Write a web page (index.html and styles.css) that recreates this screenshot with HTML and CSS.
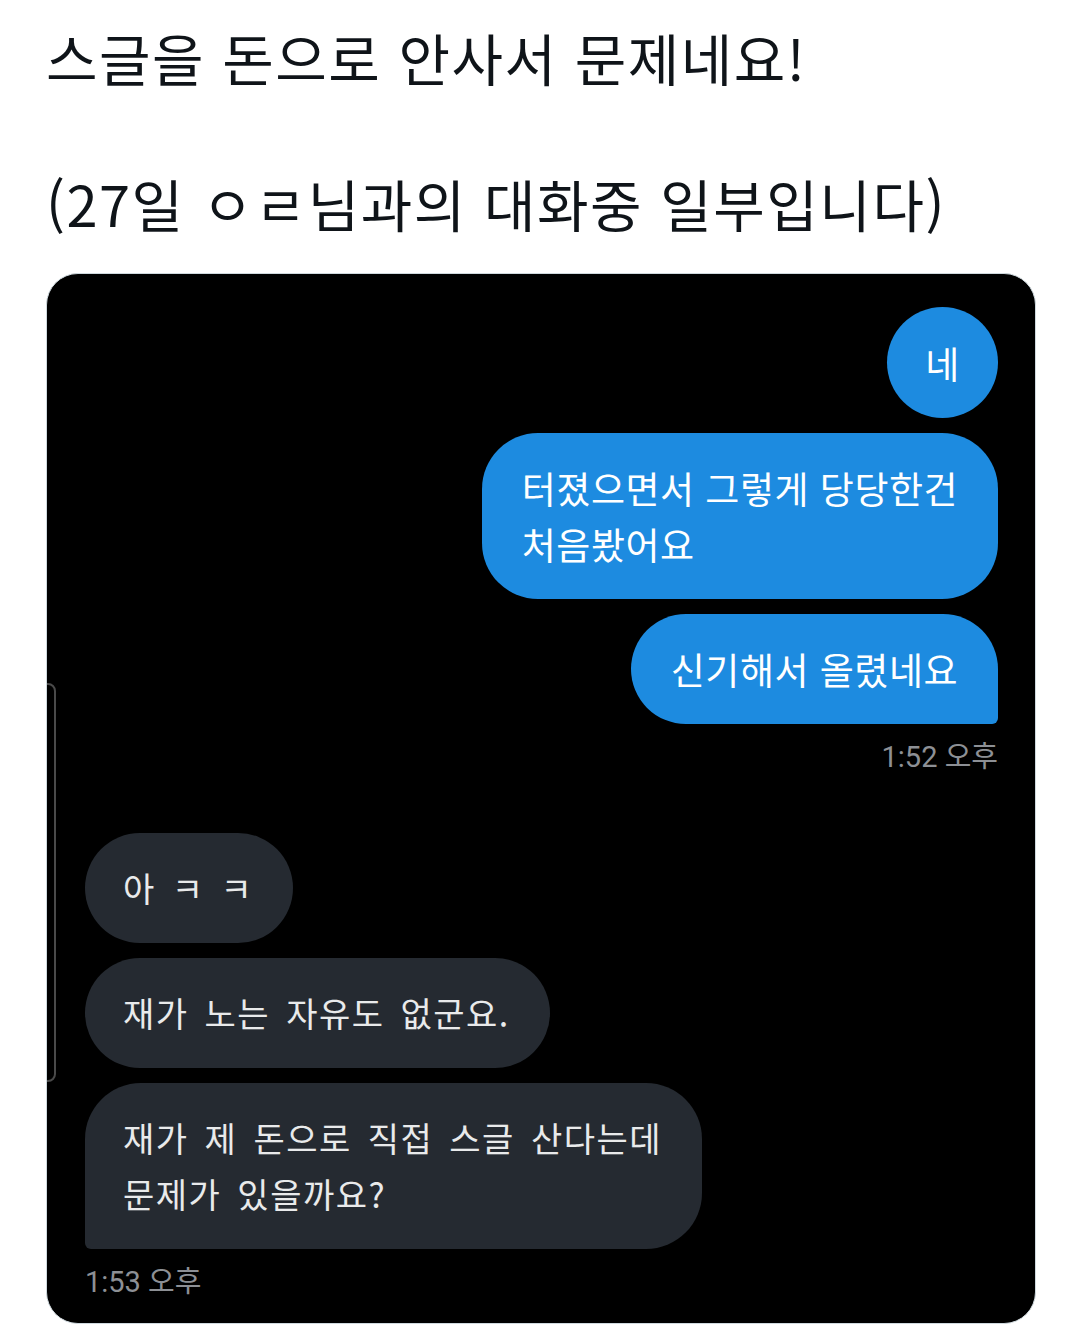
FILE: index.html
```html
<!DOCTYPE html>
<html lang="ko">
<head>
    <meta charset="UTF-8">
    <meta name="viewport" content="width=device-width, initial-scale=1.0">
    <title>스글을 돈으로 안사서 문제네요!</title>
    <link rel="stylesheet" href="styles.css">
</head>
<body>
    <div class="page">
        <!-- Post text -->
        <div class="post-text">
            <p>스글을 돈으로 안사서 문제네요!</p>
            <p>(27일 ㅇㄹ님과의 대화중 일부입니다)</p>
        </div>

        <!-- Attached chat screenshot -->
        <div class="shot">
            <div class="ghost-edge"></div>
            <div class="chat">
                <div class="msg mine round">네</div>
                <div class="msg mine">터졌으면서 그렇게 당당한건<br>처음봤어요</div>
                <div class="msg mine last">신기해서 올렸네요</div>
                <div class="time mine-time">1:52 오후</div>

                <div class="msg theirs first">아 ㅋ ㅋ</div>
                <div class="msg theirs">재가 노는 자유도 없군요.</div>
                <div class="msg theirs last">재가 제 돈으로 직접 스글 산다는데<br>문제가 있을까요?</div>
                <div class="time">1:53 오후</div>
            </div>
        </div>
    </div>
</body>
</html>
```

FILE: styles.css
```css
body {
    margin: 0;
    background: #ffffff;
    font-family: "Noto Sans CJK KR", "Noto Sans", sans-serif;
}
.page {
    padding: 20px 44px 0 46px;
}
.post-text {
    color: #0f1419;
    font-size: 56px;
    line-height: 73px;
    letter-spacing: 1.5px;
}
.post-text p {
    margin: 0 0 73px 0;
}
.post-text p:last-child {
    margin-bottom: 0;
}
.shot {
    position: relative;
    margin-top: 34px;
    width: 990px;
    height: 1051px;
    box-sizing: border-box;
    background: #000000;
    border: 1px solid #cfd9de;
    border-radius: 32px;
    overflow: hidden;
}
/* faint edge of something cropped out of the original screenshot */
.ghost-edge {
    position: absolute;
    left: -12px;
    top: 409px;
    width: 17px;
    height: 395px;
    border: 2px solid #4a4a4a;
    border-radius: 8px;
}
.chat {
    display: flex;
    flex-direction: column;
    padding: 33px 37px 0 38px;
}
.msg {
    font-size: 37px;
    line-height: 56px;
    padding: 27px 40px;
    border-radius: 56px;
    margin-bottom: 15px;
    letter-spacing: 0.5px;
}
.msg.mine {
    align-self: flex-end;
    background: #1d8be0;
    color: #ffffff;
}
.msg.mine.last {
    border-bottom-right-radius: 6px;
    margin-bottom: 0;
}
.msg.round {
    width: 111px;
    height: 111px;
    padding: 0;
    box-sizing: border-box;
    border-radius: 50%;
    display: flex;
    align-items: center;
    justify-content: center;
}
.msg.theirs {
    align-self: flex-start;
    background: #252a31;
    color: #e9eaeb;
    font-size: 34px;
    padding: 27px 40px 27px 38px;
    letter-spacing: 1.5px;
    word-spacing: 5px;
}
.msg.theirs.first {
    margin-top: 58px;
}
.msg.theirs.last {
    border-bottom-left-radius: 6px;
    margin-bottom: 0;
}
.time {
    font-family: Roboto, "Noto Sans CJK KR", sans-serif;
    font-size: 29px;
    line-height: 36px;
    color: #8d9095;
    margin-top: 15px;
}
.mine-time {
    align-self: flex-end;
}
```
